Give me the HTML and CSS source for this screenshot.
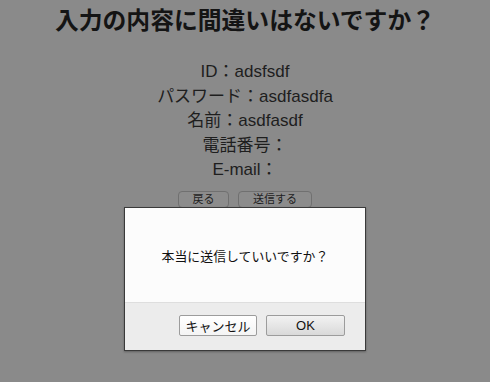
FILE: index.html
```html
<!DOCTYPE html>
<html lang="ja">
<head>
<meta charset="utf-8">
<link rel="stylesheet" href="styles.css">
</head>
<body>
<div class="page">
  <h1 class="title">入力の内容に間違いはないですか？</h1>
  <div class="info">
    <p>ID：adsfsdf</p>
    <p>パスワード：asdfasdfa</p>
    <p>名前：asdfasdf</p>
    <p>電話番号：</p>
    <p>E-mail：</p>
  </div>
  <div class="actions">
    <button class="pbtn back">戻る</button>
    <button class="pbtn send">送信する</button>
  </div>
</div>
<div class="dialog">
  <div class="dlg-body">本当に送信していいですか？</div>
  <div class="dlg-foot">
    <button class="dbtn cancel">キャンセル</button>
    <button class="dbtn ok">OK</button>
  </div>
</div>
</body>
</html>
```
FILE: styles.css
```css
html, body {
  margin: 0;
  padding: 0;
}
body {
  width: 490px;
  height: 382px;
  background: #8a8a8a;
  font-family: "Liberation Sans", "Noto Sans CJK JP", sans-serif;
  color: #1c1c1c;
  overflow: hidden;
  position: relative;
}
.page {
  display: flex;
  flex-direction: column;
  align-items: center;
  padding-top: 6px;
}
.title {
  margin: 0;
  font-size: 23.8px;
  line-height: 30px;
  font-weight: bold;
  color: #141414;
  font-family: "Liberation Sans", "Noto Sans CJK JP", sans-serif;
}
.info {
  margin-top: 24px;
  text-align: center;
  font-size: 17px;
  line-height: 24.5px;
  color: #1e1e1e;
}
.info p {
  margin: 0;
}
.actions {
  display: flex;
  gap: 9px;
  margin-top: 8px;
}
.pbtn {
  height: 17px;
  padding: 0;
  border: 1px solid #707070;
  border-radius: 4px;
  background: #8c8c8c;
  color: #1e1e1e;
  font-family: "Liberation Sans", "Noto Sans CJK JP", sans-serif;
  font-size: 11px;
  line-height: 15px;
}
.back { width: 51px; }
.send { width: 74px; }
.dialog {
  position: absolute;
  left: 124px;
  top: 207px;
  width: 240px;
  height: 142px;
  border: 1px solid #3a3a3a;
  display: flex;
  flex-direction: column;
  box-shadow: 0 1px 2px rgba(0,0,0,0.3);
}
.dlg-body {
  height: 94px;
  background: #fcfcfc;
  display: flex;
  align-items: center;
  justify-content: center;
  font-size: 12.9px;
  color: #111;
}
.dlg-foot {
  flex: 1;
  background: #ececec;
  border-top: 1px solid #dedede;
  display: flex;
  justify-content: flex-end;
  align-items: flex-start;
  gap: 9px;
  padding: 12px 20px 0 0;
}
.dbtn {
  height: 21px;
  padding: 0;
  border: 1px solid #9c9c9c;
  border-radius: 2px;
  font-family: "Liberation Sans", "Noto Sans CJK JP", sans-serif;
  font-size: 13px;
  color: #111;
}
.cancel {
  width: 78px;
  background: linear-gradient(#ffffff, #f4f4f4);
}
.ok {
  width: 79px;
  background: linear-gradient(#f2f2f2, #d9d9d9);
}
```
